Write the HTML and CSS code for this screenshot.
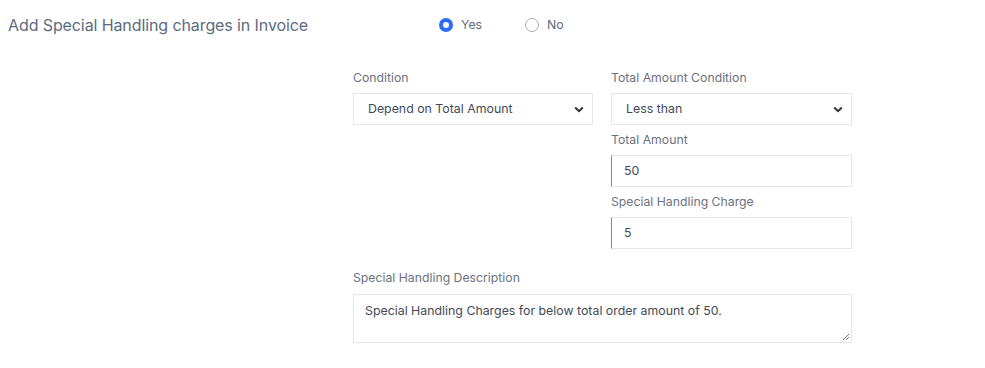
FILE: index.html
```html
<!DOCTYPE html>
<html>
<head>
<meta charset="utf-8">
<link rel="stylesheet" href="styles.css">
</head>
<body>
<div class="page">
  <div class="top-row">
    <div class="title">Add Special Handling charges in Invoice</div>
    <div class="radios">
      <label class="radio"><span class="dot on"></span><span class="rlabel">Yes</span></label>
      <label class="radio"><span class="dot"></span><span class="rlabel">No</span></label>
    </div>
  </div>
  <div class="form">
    <div class="grid">
      <div class="col">
        <div class="field">
          <div class="flabel">Condition</div>
          <div class="control select">
            <span class="val">Depend on Total Amount</span>
            <svg class="chev" width="10" height="7" viewBox="0 0 10 7"><path d="M1.2 1.5 L5 5.2 L8.8 1.5" fill="none" stroke="#333" stroke-width="2"/></svg>
          </div>
        </div>
      </div>
      <div class="col">
        <div class="field">
          <div class="flabel">Total Amount Condition</div>
          <div class="control select">
            <span class="val">Less than</span>
            <svg class="chev" width="10" height="7" viewBox="0 0 10 7"><path d="M1.2 1.5 L5 5.2 L8.8 1.5" fill="none" stroke="#333" stroke-width="2"/></svg>
          </div>
        </div>
        <div class="field">
          <div class="flabel">Total Amount</div>
          <div class="control input"><span class="val">50</span></div>
        </div>
        <div class="field">
          <div class="flabel">Special Handling Charge</div>
          <div class="control input"><span class="val">5</span></div>
        </div>
      </div>
    </div>
    <div class="field wide">
      <div class="flabel">Special Handling Description</div>
      <div class="control textarea">
        <span class="val">Special Handling Charges for below total order amount of 50.</span>
        <svg class="grip" width="9" height="9" viewBox="0 0 9 9"><path d="M8 2 L2 8 M8 5 L5 8" stroke="#777" stroke-width="1"/></svg>
      </div>
    </div>
  </div>
</div>
</body>
</html>
```

FILE: styles.css
```css
* { box-sizing: border-box; }
body {
  margin: 0;
  background: #fff;
  font-family: "Inter", "Noto Sans", sans-serif;
  color: #4a5568;
}
.page { padding: 14px 0 0 8px; }
.top-row {
  display: flex;
  align-items: center;
  height: 22px;
}
.title {
  width: 431px;
  font-size: 16px;
  color: #5d6b7e;
  letter-spacing: -0.1px;
}
.radios { display: flex; }
.radio {
  display: flex;
  align-items: center;
  width: 86px;
  margin-top: -1px;
}
.dot {
  width: 14px;
  height: 14px;
  border-radius: 50%;
  border: 1px solid #a8adb5;
  background: #fff;
  margin-right: 8px;
}
.dot.on {
  border: 4px solid #2a6df4;
  background: #fff;
}
.rlabel { font-size: 12.3px; color: #5d6b7e; }
.form {
  margin: 33px 0 0 345px;
  width: 499px;
}
.grid {
  display: grid;
  grid-template-columns: 240px 241px;
  column-gap: 18px;
}
.field { display: flex; flex-direction: column; }
.flabel {
  font-size: 12.25px;
  color: #6b7280;
  height: 24px;
  line-height: 16px;
  padding-top: 1px;
}
.col .field + .field { margin-top: 6px; }
.control {
  display: flex;
  align-items: center;
  border: 1px solid #e3e6ea;
  font-size: 12.35px;
  color: #434a57;
}
.select {
  height: 32px;
  padding: 0 8px 2px 14px;
  justify-content: space-between;
}
.chev { margin-top: 2px; }
.input {
  height: 32px;
  padding: 0 0 2px 12px;
  border-left: 1px solid #8a8a8a;
}
.wide { margin-top: 20px; }
.wide .flabel { height: 25px; }
.textarea {
  position: relative;
  height: 49px;
  align-items: flex-start;
  padding: 8px 11px;
}
.grip { position: absolute; right: 1px; bottom: 1px; }
```
